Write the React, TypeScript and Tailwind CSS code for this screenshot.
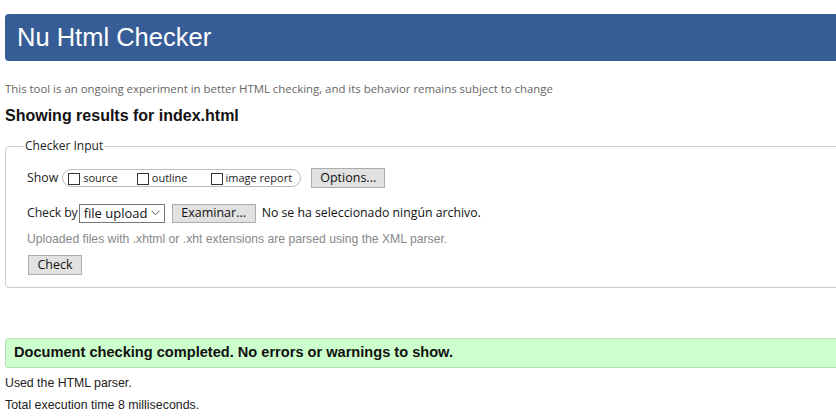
import React from "react";

const seg = { fontFamily: '"Open Sans", "Noto Sans", sans-serif' };
const ar = { fontFamily: '"Liberation Sans", Arial, sans-serif' };

function Box() {
  return <span className="inline-block w-[12px] h-[12px] border border-[#333] bg-white mr-[3px] translate-y-[1px]" />;
}

export default function App() {
  return (
    <div className="w-[836px] h-[417px] overflow-hidden bg-white pt-[14px] pl-[5px]" style={ar}>
      <div className="w-[860px] h-[47px] bg-[#365d95] rounded-[4px] pl-[12px] flex items-center text-white text-[25.5px] leading-none">
        Nu Html Checker
      </div>
      <div className="mt-[20px] h-[16px] leading-[16px] text-[11.4px] text-[#666] whitespace-nowrap" style={seg}>
        This tool is an ongoing experiment in better HTML checking, and its behavior remains subject to change
      </div>
      <div className="mt-[9px] h-[20px] leading-[20px] text-[16px] font-bold text-[#111]">
        Showing results for index.html
      </div>
      <fieldset className="mt-[12px] w-[860px] border border-[#ccc] rounded-[4px] pl-[21px] pb-[12px]">
        <legend className="ml-[-3px] px-[1px] h-[16px] leading-[16px] text-[12px] text-[#222]" style={seg}>
          Checker Input
        </legend>
        <div className="mt-[14px] h-[20px] flex items-center text-[12.3px] text-[#222] whitespace-nowrap" style={seg}>
          <span className="mr-[4px]">Show</span>
          <div className="h-[18px] w-[239px] border border-[#bbb] rounded-full flex items-center pl-[5px] text-[11px]">
            <label className="flex items-center"><Box />source</label>
            <label className="flex items-center ml-[19px]"><Box />outline</label>
            <label className="flex items-center ml-[23px]"><Box />image report</label>
          </div>
          <button className="ml-[10px] h-[20px] w-[74px] bg-[#e1e1e1] border border-[#adadad] text-[12.5px] text-[#111] leading-none">
            Options...
          </button>
        </div>
        <div className="mt-[15px] h-[20px] flex items-center text-[12.3px] text-[#222] whitespace-nowrap" style={seg}>
          <span className="mr-[1px] tracking-[-0.1px]">Check by</span>
          <div className="h-[19px] w-[86px] border border-[#767676] bg-white flex items-center pl-[4px] pr-[4px] text-[13px] text-[#111] leading-none">
            <span className="flex-1">file upload</span>
            <svg width="9" height="6" viewBox="0 0 9 6"><path d="M0.5 0.8 L4.5 4.8 L8.5 0.8" fill="none" stroke="#555" strokeWidth="1" /></svg>
          </div>
          <button className="ml-[7px] h-[19px] w-[84px] bg-[#e1e1e1] border border-[#adadad] text-[12.5px] text-[#111] leading-none">
            Examinar...
          </button>
          <span className="ml-[6px] text-[#111]">No se ha seleccionado ningún archivo.</span>
        </div>
        <div className="mt-[8px] h-[16px] leading-[16px] text-[12.2px] text-[#888] whitespace-nowrap">
          Uploaded files with .xhtml or .xht extensions are parsed using the XML parser.
        </div>
        <button className="mt-[8px] ml-[1px] h-[20px] w-[54px] bg-[#e1e1e1] border border-[#adadad] text-[12.5px] text-[#111] leading-none block" style={seg}>
          Check
        </button>
      </fieldset>
      <div className="mt-[50px] w-[860px] h-[30px] bg-[#ccffcc] border border-[#bbddbb] rounded-[3px] pl-[8px] flex items-center text-[14.6px] font-bold text-[#111] whitespace-nowrap">
        Document checking completed. No errors or warnings to show.
      </div>
      <div className="mt-[7px] h-[16px] leading-[16px] text-[12.3px] text-[#222]">Used the HTML parser.</div>
      <div className="mt-[6px] h-[16px] leading-[16px] text-[12.4px] text-[#222]">Total execution time 8 milliseconds.</div>
    </div>
  );
}
